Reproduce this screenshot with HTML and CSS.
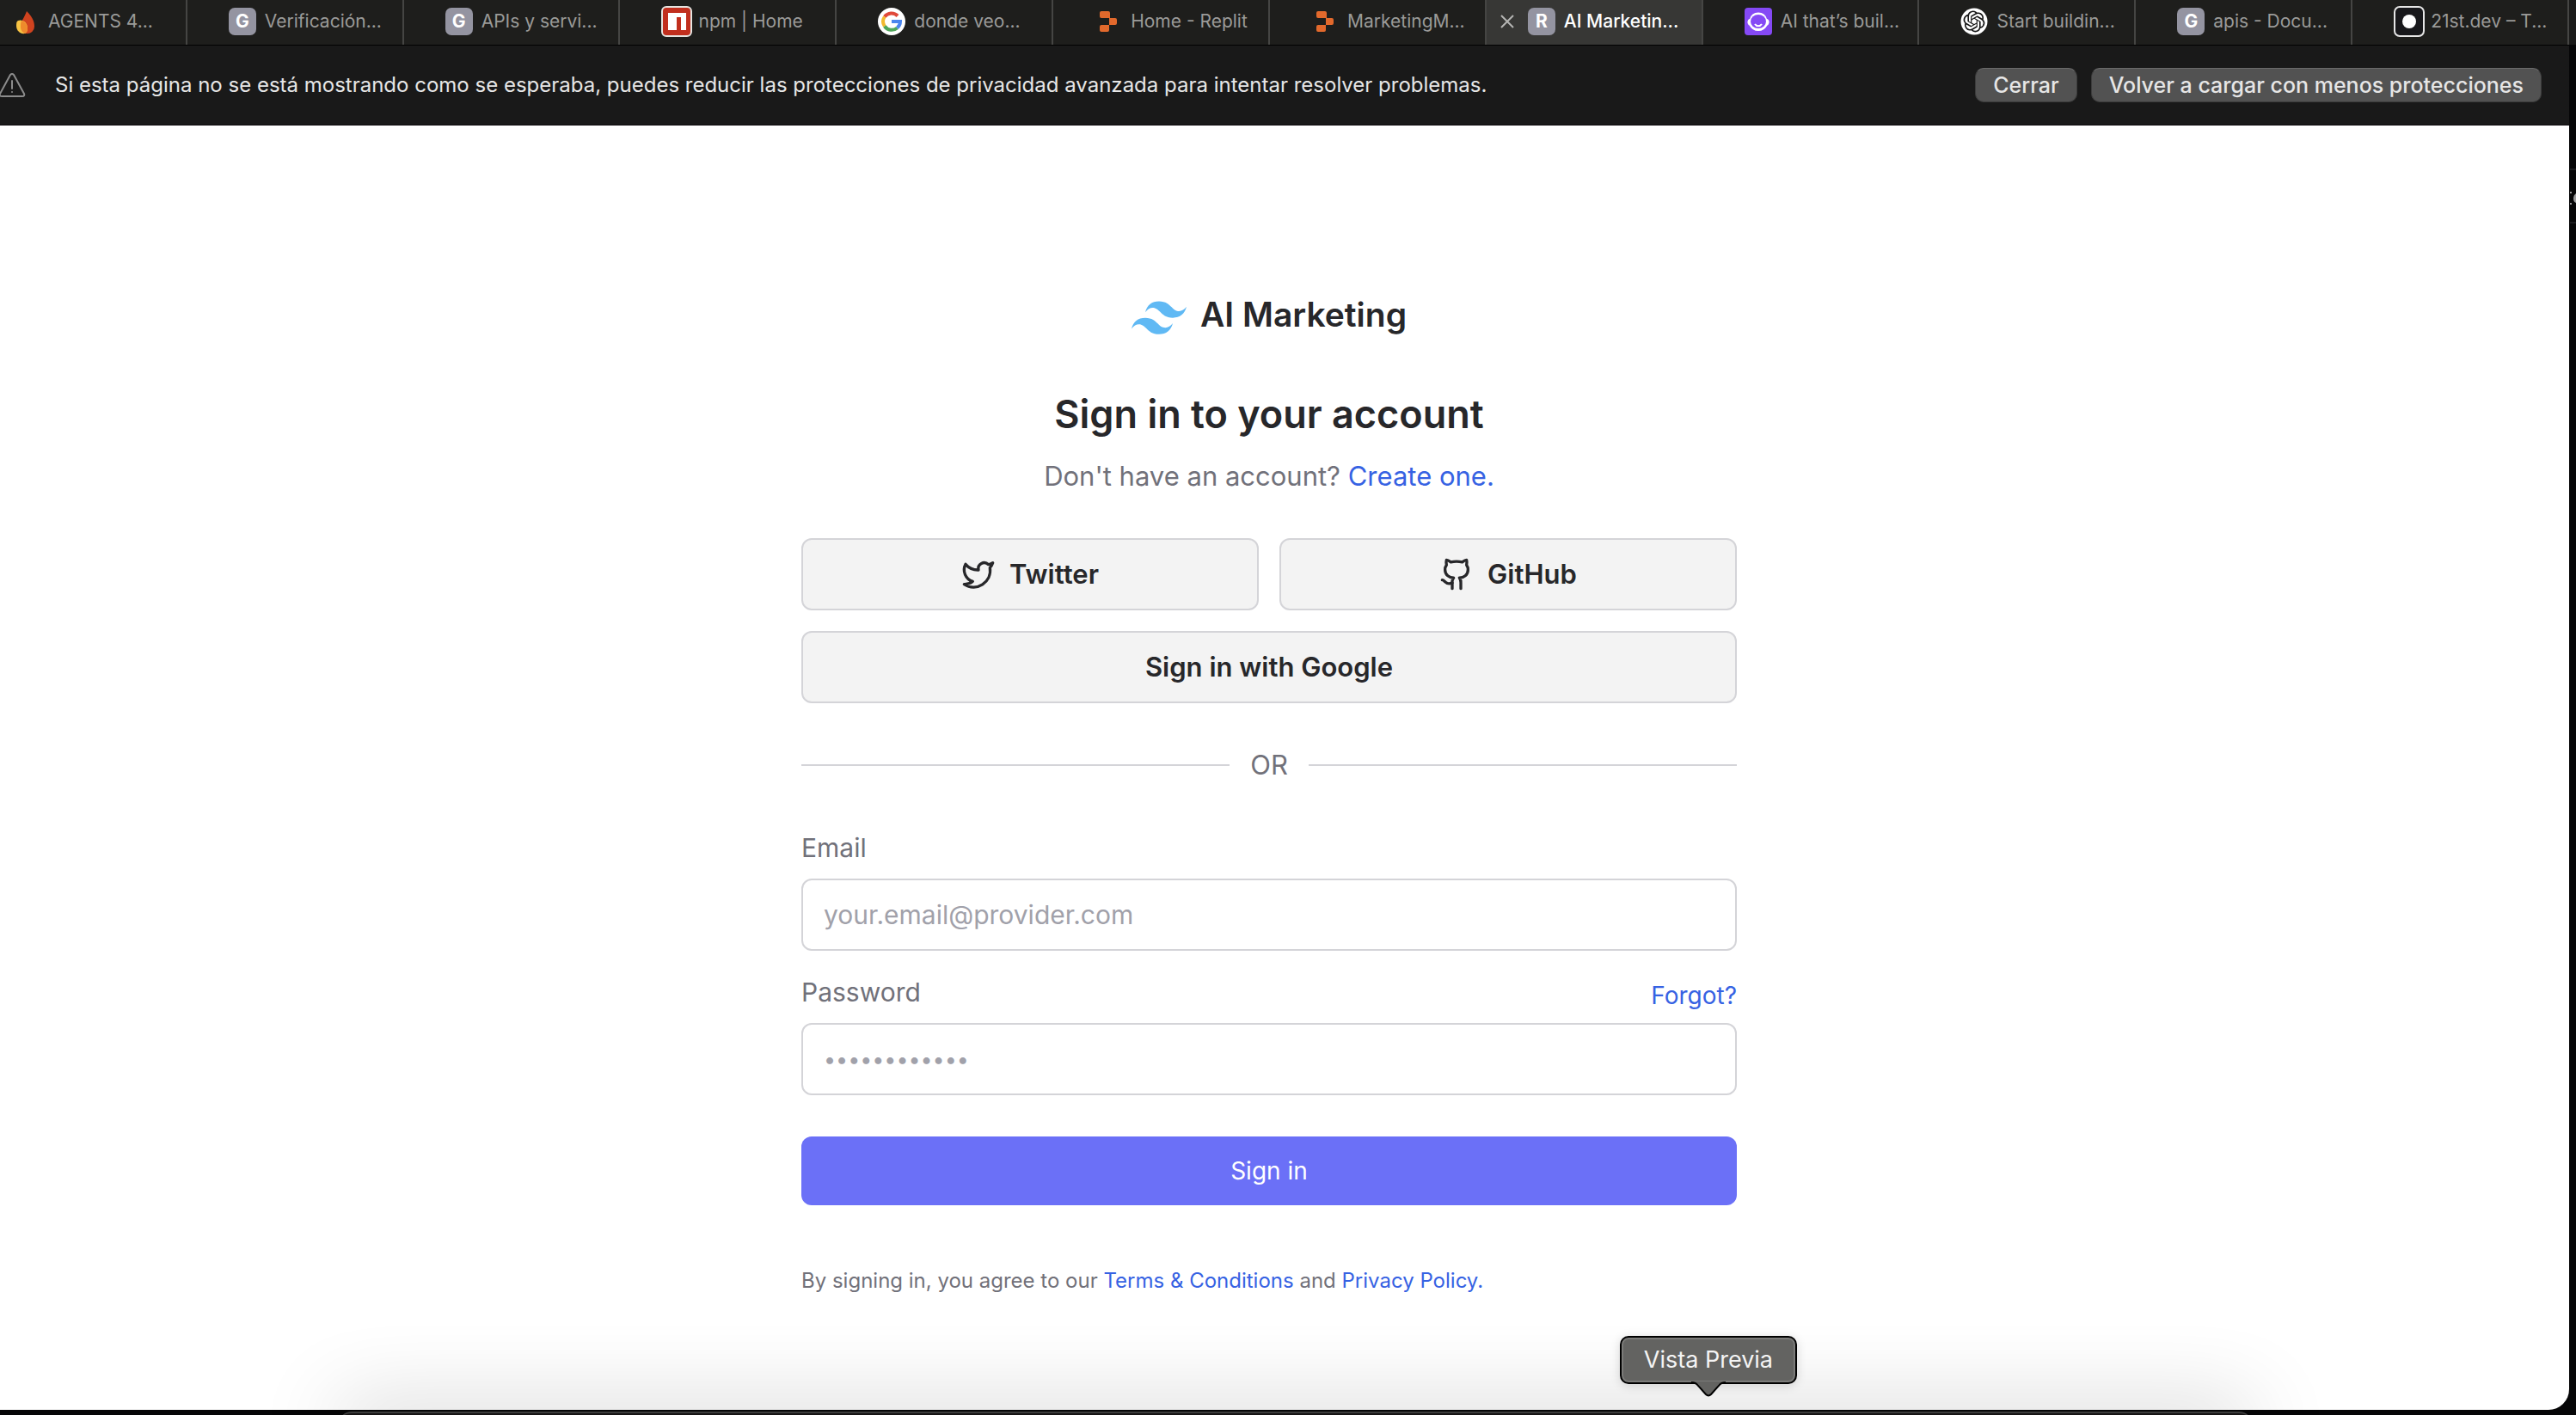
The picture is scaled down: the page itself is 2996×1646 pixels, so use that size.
FILE: index.html
```html
<!DOCTYPE html>
<html lang="es">
<head>
<meta charset="utf-8">
<title>AI Marketing</title>
<link rel="stylesheet" href="styles.css">
</head>
<body>
<div class="window">
  <nav class="tabs" aria-label="Pestañas">
    <a class="tab" href="#"><span class="fav"><svg viewBox="0 0 32 32"><path d="M17 4c8 8 9 13 9 18a8 8 0 0 1-9 8c-5 0-8-4-7-10 1-5 5-10 7-16z" fill="#d0431f"/><path d="M7 15c5-2 11 2 11 9 0 3-1 5-3 6-5 1-10-3-10-9 0-3 0-5 2-6z" fill="#f7c343"/><path d="M11 15c4 1 7 5 7 9 0 3-1 5-3 6-3-1-5-4-5-8 0-3 0-5 1-7z" fill="#ee8a2c"/></svg></span><span class="name">AGENTS 4...</span></a>
    <a class="tab" href="#"><span class="fav letter">G</span><span class="name">Verificación...</span></a>
    <a class="tab" href="#"><span class="fav letter">G</span><span class="name">APIs y servi...</span></a>
    <a class="tab" href="#"><span class="fav framed"><svg viewBox="0 0 36 36"><rect x="1" y="1" width="34" height="34" rx="5" fill="#c12f1e" stroke="#e6e4e0" stroke-width="2"/><path d="M8 8h21v20h-6V13h-5v15H8z" fill="#fff"/></svg></span><span class="name">npm | Home</span></a>
    <a class="tab" href="#"><span class="fav"><svg viewBox="0 0 32 32"><circle cx="16" cy="16" r="16" fill="#fff"/><g fill="none" stroke-width="4"><path d="M23 9.500A10 10 0 0 0 7.800 10.500" stroke="#e0493a"/><path d="M7.800 10.500a10 10 0 0 0 0 11" stroke="#f2b92f"/><path d="M7.800 21.500A10 10 0 0 0 22.500 23.500" stroke="#4fa65a"/><path d="M22.500 23.500A10 10 0 0 0 26 16H16" stroke="#4b86ee"/></g></svg></span><span class="name">donde veo...</span></a>
    <a class="tab" href="#"><span class="fav"><svg viewBox="0 0 32 32" fill="#e2692c"><path d="M8 4h8a2 2 0 0 1 2 2v6H8a2 2 0 0 1-2-2V6a2 2 0 0 1 2-2zM17 12h7a2 2 0 0 1 2 2v4a2 2 0 0 1-2 2h-7zM8 20h9v6a2 2 0 0 1-2 2H8a2 2 0 0 1-2-2v-4a2 2 0 0 1 2-2z"/></svg></span><span class="name">Home - Replit</span></a>
    <a class="tab" href="#"><span class="fav"><svg viewBox="0 0 32 32" fill="#e2692c"><path d="M8 4h8a2 2 0 0 1 2 2v6H8a2 2 0 0 1-2-2V6a2 2 0 0 1 2-2zM17 12h7a2 2 0 0 1 2 2v4a2 2 0 0 1-2 2h-7zM8 20h9v6a2 2 0 0 1-2 2H8a2 2 0 0 1-2-2v-4a2 2 0 0 1 2-2z"/></svg></span><span class="name">MarketingM...</span></a>
    <div class="tab active"><button class="close" aria-label="Cerrar pestaña"><svg viewBox="0 0 16 16"><path d="M1 1l14 14M15 1L1 15" stroke="#b5b5b3" stroke-width="2"/></svg></button><span class="fav letter">R</span><span class="name">AI Marketin...</span></div>
    <a class="tab" href="#"><span class="fav"><svg viewBox="0 0 32 32"><rect width="32" height="32" rx="4" fill="#8549f5"/><path d="M16 6.500c5 0 8 3 9 7q3 1 2.500 4-.5 2-2 2.500c-2 4-5 6-9.500 6s-7.500-2-9.500-6q-1.500-.5-2-2.500-.5-3 2.500-4c1-4 4-7 9-7z" fill="#fff" stroke="#fff" stroke-width="2"/><ellipse cx="16" cy="16" rx="9" ry="8" fill="#8549f5"/><path d="M12 19c2 3 6 3 8 0" fill="none" stroke="#fff" stroke-width="2"/></svg></span><span class="name">AI that’s buil...</span></a>
    <a class="tab" href="#"><span class="fav"><svg viewBox="0 0 32 32"><circle cx="16" cy="16" r="15.500" fill="#fff"/><path transform="translate(3.500 3.500) scale(1.040)" fill="#161616" d="M22.2819 9.8211a5.9847 5.9847 0 0 0-.5157-4.9108 6.0462 6.0462 0 0 0-6.5098-2.9A6.0651 6.0651 0 0 0 4.9807 4.1818a5.9847 5.9847 0 0 0-3.9977 2.9 6.0462 6.0462 0 0 0 .7427 7.0966 5.98 5.98 0 0 0 .511 4.9107 6.051 6.051 0 0 0 6.5146 2.9001A5.9847 5.9847 0 0 0 13.2599 24a6.0557 6.0557 0 0 0 5.7718-4.2058 5.9894 5.9894 0 0 0 3.9977-2.9001 6.0557 6.0557 0 0 0-.7475-7.0729zm-9.022 12.6081a4.4755 4.4755 0 0 1-2.8764-1.0408l.1419-.0804 4.7783-2.7582a.7948.7948 0 0 0 .3927-.6813v-6.7369l2.02 1.1686a.071.071 0 0 1 .038.052v5.5826a4.504 4.504 0 0 1-4.4945 4.4944zm-9.6607-4.1254a4.4708 4.4708 0 0 1-.5346-3.0137l.142.0852 4.783 2.7582a.7712.7712 0 0 0 .7806 0l5.8428-3.3685v2.3324a.0804.0804 0 0 1-.0332.0615L9.74 19.9502a4.4992 4.4992 0 0 1-6.1408-1.6464zM2.3408 7.8956a4.485 4.485 0 0 1 2.3655-1.9728V11.6a.7664.7664 0 0 0 .3879.6765l5.8144 3.3543-2.0201 1.1685a.0757.0757 0 0 1-.071 0l-4.8303-2.7865A4.504 4.504 0 0 1 2.3408 7.872zm16.5963 3.8558L13.1038 8.364 15.1192 7.2a.0757.0757 0 0 1 .071 0l4.8303 2.7913a4.4944 4.4944 0 0 1-.6765 8.1042v-5.6772a.79.79 0 0 0-.407-.667zm2.0107-3.0231l-.142-.0852-4.7735-2.7818a.7759.7759 0 0 0-.7854 0L9.409 9.2297V6.8974a.0662.0662 0 0 1 .0284-.0615l4.8303-2.7866a4.4992 4.4992 0 0 1 6.6802 4.66zM8.3065 12.863l-2.02-1.1638a.0804.0804 0 0 1-.038-.0567V6.0742a4.4992 4.4992 0 0 1 7.3757-3.4537l-.142.0805L8.704 5.459a.7948.7948 0 0 0-.3927.6813zm1.0976-2.3654l2.602-1.4998 2.6069 1.4998v2.9994l-2.5974 1.4997-2.6067-1.4997Z"/></svg></span><span class="name">Start buildin...</span></a>
    <a class="tab" href="#"><span class="fav letter">G</span><span class="name">apis - Docu...</span></a>
    <a class="tab" href="#"><span class="fav framed"><svg viewBox="0 0 36 36"><rect x="1" y="1" width="34" height="34" rx="6" fill="#18181b" stroke="#e6e6e6" stroke-width="2"/><circle cx="18" cy="18" r="8" fill="#fff"/></svg></span><span class="name">21st.dev – T...</span></a>
  </nav>

  <div class="notice" role="status">
    <svg class="warn" viewBox="0 0 32 28" fill="none" stroke="#8c8c8c" stroke-width="2" stroke-linecap="round" stroke-linejoin="round"><path d="M14 2q2-2 4 0l12 22q1 3-2 3H4q-3 0-2-3z"/><path d="M16 9v9M16 22v0"/></svg>
    <p class="notice-text">Si esta página no se está mostrando como se esperaba, puedes reducir las protecciones de privacidad avanzada para intentar resolver problemas.</p>
    <button class="notice-btn">Cerrar</button>
    <button class="notice-btn">Volver a cargar con menos protecciones</button>
  </div>

  <main class="page">
    <div class="card">
      <div class="brand">
        <svg class="brand-mark" viewBox="0 0 54 33" fill="#60b9f4"><path d="M27 0c-7.200 0-11.700 3.600-13.500 10.800 2.700-3.600 5.850-4.950 9.450-4.050 2.054.513 3.522 2.004 5.147 3.653C30.744 13.090 33.808 16.200 40.500 16.200c7.200 0 11.700-3.600 13.500-10.800-2.700 3.600-5.850 4.950-9.450 4.050-2.054-.513-3.522-2.004-5.147-3.653C36.756 3.110 33.692 0 27 0zM13.500 16.200C6.300 16.200 1.800 19.800 0 27c2.700-3.600 5.850-4.950 9.450-4.050 2.054.514 3.522 2.004 5.147 3.653C17.244 29.290 20.308 32.400 27 32.400c7.200 0 11.700-3.600 13.500-10.800-2.700 3.600-5.850 4.950-9.450 4.050-2.054-.513-3.522-2.004-5.147-3.653C23.256 19.310 20.192 16.200 13.500 16.200z"/></svg>
        <span>AI Marketing</span>
      </div>
      <h1 class="title">Sign in to your account</h1>
      <p class="sub">Don't have an account? <a href="#">Create one.</a></p>

      <div class="social">
        <button class="social-btn"><svg viewBox="0 0 24 24"><path d="M22 4s-.7 2.100-2 3.400c1.600 10-9.400 17.300-18 11.600 2.200.1 4.400-.6 6-2C3 15.500.5 9.600 3 5c2.200 2.600 5.600 4.100 9 4-.9-4.200 4-6.600 7-3.800 1.100 0 3-1.200 3-1.200z"/></svg>Twitter</button>
        <button class="social-btn"><svg viewBox="0 0 24 24"><path d="M15 22v-4a4.800 4.800 0 0 0-1-3.500c3 0 6-2 6-5.500.08-1.250-.27-2.480-1-3.500.28-1.150.28-2.350 0-3.500 0 0-1 0-3 1.500-2.640-.5-5.360-.5-8 0C6 2 5 2 5 2c-.3 1.150-.3 2.350 0 3.500A5.403 5.403 0 0 0 4 9c0 3.500 3 5.500 6 5.500-.39.49-.68 1.050-.85 1.650-.17.6-.22 1.230-.15 1.850v4"/><path d="M9 18c-4.510 2-5-2-7-2"/></svg>GitHub</button>
        <button class="social-btn wide">Sign in with Google</button>
      </div>

      <div class="divider">OR</div>

      <form class="form">
        <div class="label-row"><label for="email">Email</label></div>
        <input class="field" id="email" type="email" placeholder="your.email@provider.com">
        <div class="label-row next"><label for="password">Password</label><a class="forgot" href="#">Forgot?</a></div>
        <input class="field masked" id="password" type="password" placeholder="••••••••••••">
        <button class="submit" type="submit">Sign in</button>
      </form>

      <p class="legal">By signing in, you agree to our <a href="#">Terms &amp; Conditions</a> and <a href="#">Privacy Policy.</a></p>
    </div>
  </main>
</div>

<svg class="behind" viewBox="0 0 8 264" aria-hidden="true"><path d="M0 0h8v52H0z" fill="#1a1a19"/><path d="M1 196h7v2H1zM1 258h7v2H1z" fill="#1c1c1e"/><path d="M1 223h2v2H1zM1 236h2v2H1zM8 225q-3 2-3 6t3 5z" fill="#9c9c9c"/></svg>
<div class="dock"></div>
<div class="tooltip" role="tooltip">Vista Previa
  <svg class="tip" viewBox="0 0 40 18"><path d="M0 0h40v1c-4 0-6 1-8 4l-9 10q-3 3-6 0L8 5C6 2 4 1 0 1z" fill="#636361"/><path d="M0 1c4 0 6 1 8 4l9 10q3 3 6 0l9-10c2-3 4-4 8-4" fill="none" stroke="#000" stroke-width="2"/></svg>
</div>
</body>
</html>
```
FILE: styles.css
```css
* { box-sizing: border-box; }

body {
  margin: 0;
  min-height: 100vh;
  display: flex;
  flex-direction: column;
  position: relative;
  overflow: hidden;
  background: #060607;
  font-family: Inter, "Liberation Sans", sans-serif;
}

button, input { font: inherit; margin: 0; }
a { color: #3662e3; text-decoration: none; }
svg { display: block; }
p, h1 { margin: 0; }

.window {
  flex: 1;
  display: flex;
  flex-direction: column;
  margin: 0 8px 6px -36px;
  background: #fff;
  border-radius: 0 0 24px 24px;
  overflow: hidden;
}

/* Tab strip */
.tabs {
  display: grid;
  grid-template-columns: repeat(12, 1fr);
  height: 53px;
  padding-left: 2px;
  background: #1e1e1c;
  border-bottom: 1px solid #000;
}
.tab {
  display: flex;
  align-items: center;
  gap: 10px;
  padding: 0 8px 2px 48px;
  border-right: 2px solid #454543;
  color: #9a9a98;
  font-size: 21px;
  line-height: 28px;
  white-space: nowrap;
  overflow: hidden;
  position: relative;
}
.tab.active { background: #373735; color: #fff; font-weight: 500; }
.fav { flex: none; width: 32px; height: 32px; }
.fav svg { width: 100%; height: 100%; }
.framed { width: 36px; height: 36px; margin-right: -3px; }
.letter {
  border-radius: 7px;
  background: #9494a1;
  color: #fff;
  font-weight: 700;
  line-height: 32px;
  text-align: center;
}
.close {
  position: absolute;
  left: 16px;
  top: 17px;
  width: 16px;
  height: 16px;
  padding: 0;
  border: 0;
  background: none;
}

/* Privacy notice */
.notice {
  display: flex;
  align-items: center;
  height: 93px;
  padding: 0 32px 0 34px;
  gap: 16px;
  background: #191919;
  border-bottom: 1px solid #0e0a0e;
  color: #e6e6e6;
  font-size: 24px;
  line-height: 32px;
}
.warn { width: 32px; height: 28px; }
.notice-text { flex: 1; padding-left: 18px; white-space: nowrap; }
.notice-btn {
  height: 40px;
  padding: 0 20px;
  border: 1px solid #3c3c3c;
  border-top-color: #6a6a6a;
  border-radius: 10px;
  background: #525252;
  color: #e6e6e6;
  font-size: 25px;
  font-weight: 500;
  line-height: 32px;
}

/* Sign-in card */
.page { flex: 1; padding: 196px 32px 48px; }
.card { max-width: 1088px; margin: 0 auto; color: #71717a; font-size: 30px; line-height: 40px; }

.brand {
  display: flex;
  justify-content: center;
  align-items: flex-end;
  gap: 16px;
  color: #27272a;
  font-size: 39px;
  font-weight: 600;
  line-height: 48px;
}
.brand-mark { width: 64px; height: 40px; }
.title {
  margin-top: 64px;
  color: #27272a;
  font-size: 45px;
  font-weight: 600;
  line-height: 56px;
  text-align: center;
}
.sub { margin-top: 24px; font-size: 31px; text-align: center; }

.social { display: grid; grid-template-columns: 1fr 1fr; gap: 24px; margin-top: 52px; }
.social-btn {
  display: flex;
  align-items: center;
  justify-content: center;
  gap: 16px;
  height: 84px;
  padding: 0;
  border: 2px solid #d4d4d8;
  border-radius: 12px;
  background: #f3f3f3;
  color: #27272a;
  font-size: 31px;
  font-weight: 600;
}
.social-btn svg {
  width: 40px;
  height: 40px;
  fill: none;
  stroke: currentColor;
  stroke-width: 2;
  stroke-linecap: round;
  stroke-linejoin: round;
}
.wide { grid-column: 1 / -1; }

.divider { display: flex; align-items: center; gap: 24px; margin-top: 52px; font-size: 31px; }
.divider::before, .divider::after { content: ""; flex: 1; height: 2px; background: #d4d4d8; }

.form { margin-top: 56px; }
.label-row { display: flex; justify-content: space-between; align-items: flex-end; }
.next { margin-top: 28px; }
.forgot { font-size: 28px; line-height: 32px; }
.field {
  display: block;
  width: 100%;
  height: 84px;
  margin-top: 16px;
  padding: 0 24px;
  border: 2px solid #d4d4d8;
  border-radius: 12px;
  background: #fff;
  color: #27272a;
}
.field::placeholder { color: #a1a1aa; opacity: 1; }
.masked { font-size: 25px; }
.submit {
  display: block;
  width: 100%;
  height: 80px;
  margin-top: 48px;
  border: 0;
  border-radius: 12px;
  background: #6b70f7;
  color: #fff;
  font-size: 28px;
}
.legal { margin-top: 72px; font-size: 24px; line-height: 32px; }

/* Sliver of the window behind, at the right edge */
.behind { position: absolute; right: 0; top: 0; width: 8px; height: 264px; }

/* Dock edge and its label, over the window */
.dock {
  position: absolute;
  left: 393px;
  right: 376px;
  bottom: -26px;
  height: 30px;
  border-top: 2px solid #3c3c3c;
  border-radius: 16px 16px 0 0;
  background: #161414;
  box-shadow: 0 0 96px rgba(0, 0, 0, .3);
}
.tooltip {
  position: absolute;
  right: 906px;
  bottom: 36px;
  padding: 10px 26px;
  border: 2px solid #000;
  border-radius: 10px;
  background: #636361;
  box-shadow: inset 0 0 0 2px #7b7b79, 0 2px 12px rgba(0, 0, 0, .15);
  color: #f4f4f4;
  font-size: 27px;
  line-height: 32px;
}
.tip { position: absolute; left: calc(50% - 20px); top: calc(100% - 1px); width: 40px; height: 18px; }
```
